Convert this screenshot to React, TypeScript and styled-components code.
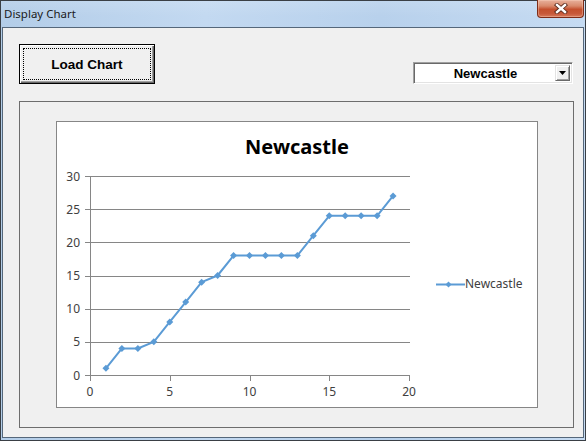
import styled, { createGlobalStyle } from "styled-components";

const GlobalStyle = createGlobalStyle`
  html, body {
    margin: 0;
    padding: 0;
    background: #ffffff;
  }
  * {
    box-sizing: border-box;
  }
`;

// points per race week, x = 1..19
const scores = [1, 4, 4, 5, 8, 11, 14, 15, 18, 18, 18, 18, 18, 21, 24, 24, 24, 24, 27];

const PLOT_LEFT = 33;
const PLOT_RIGHT = 352;
const PLOT_TOP = 10;
const PLOT_BOTTOM = 209;
const SERIES_BLUE = "#5b9bd5";

const sx = (v: number) => PLOT_LEFT + (v * (PLOT_RIGHT - PLOT_LEFT)) / 20;
const sy = (v: number) => PLOT_BOTTOM - (v * (PLOT_BOTTOM - PLOT_TOP)) / 30;
const crisp = (v: number) => Math.round(v) + 0.5;

const diamond = (x: number, y: number, r = 3.5) =>
  `${x},${y - r} ${x + r},${y} ${x},${y + r} ${x - r},${y}`;

const App = (): JSX.Element => {
  const yTicks = [0, 5, 10, 15, 20, 25, 30];
  const xTicks = [0, 5, 10, 15, 20];
  const linePoints = scores.map((s, i) => `${sx(i + 1)},${sy(s)}`).join(" ");

  return (
    <>
      <GlobalStyle />
      <Window>
        <TitleBar>
          <Caption>Display Chart</Caption>
          <CloseButton>
            <svg width="14" height="11" viewBox="0 0 14 11">
              <path d="M3 2 L11 9 M11 2 L3 9" stroke="#5a2a1c" strokeWidth="4.2" strokeLinecap="square" />
              <path d="M3 2 L11 9 M11 2 L3 9" stroke="#ffffff" strokeWidth="2.4" strokeLinecap="square" />
            </svg>
          </CloseButton>
        </TitleBar>
        <Client>
          <TopRow>
            <PushButton>
              <FocusRect>Load Chart</FocusRect>
            </PushButton>
            <ComboBox>
              <ComboText>Newcastle</ComboText>
              <ComboArrow>
                <svg width="7" height="4" viewBox="0 0 7 4">
                  <polygon points="0,0 7,0 3.5,4" fill="#000" />
                </svg>
              </ComboArrow>
            </ComboBox>
          </TopRow>
          <Frame>
            <ChartBox>
              <ChartTitle>Newcastle</ChartTitle>
              <ChartBody>
                <svg width="370" height="241" viewBox="0 0 370 241">
                  <g shapeRendering="crispEdges" stroke="#868686" strokeWidth="1">
                    {yTicks.map((t) => (
                      <line key={`g${t}`} x1={PLOT_LEFT - 5} x2={PLOT_RIGHT + 1} y1={crisp(sy(t))} y2={crisp(sy(t))} />
                    ))}
                    <line x1={crisp(PLOT_LEFT)} x2={crisp(PLOT_LEFT)} y1={crisp(PLOT_TOP)} y2={crisp(PLOT_BOTTOM) + 5} />
                    {xTicks.slice(1).map((t) => (
                      <line key={`t${t}`} x1={crisp(sx(t))} x2={crisp(sx(t))} y1={crisp(PLOT_BOTTOM)} y2={crisp(PLOT_BOTTOM) + 5} />
                    ))}
                  </g>
                  <g fill="#404040" fontFamily="'Noto Sans', 'DejaVu Sans', sans-serif" fontSize="12">
                    {yTicks.map((t) => (
                      <text key={`y${t}`} x={23} y={sy(t) + 4.5} textAnchor="end">
                        {t}
                      </text>
                    ))}
                    {xTicks.map((t) => (
                      <text key={`x${t}`} x={sx(t)} y={230} textAnchor="middle">
                        {t}
                      </text>
                    ))}
                  </g>
                  <polyline points={linePoints} fill="none" stroke={SERIES_BLUE} strokeWidth="2" strokeLinejoin="round" />
                  {scores.map((s, i) => (
                    <polygon key={i} points={diamond(sx(i + 1), sy(s))} fill={SERIES_BLUE} />
                  ))}
                </svg>
                <Legend>
                  <svg width="29" height="9" viewBox="0 0 29 9">
                    <line x1="0" x2="29" y1="4.5" y2="4.5" stroke={SERIES_BLUE} strokeWidth="2" />
                    <polygon points={diamond(12.5, 4.5, 3)} fill={SERIES_BLUE} />
                  </svg>
                  <LegendLabel>Newcastle</LegendLabel>
                </Legend>
              </ChartBody>
            </ChartBox>
          </Frame>
        </Client>
      </Window>
    </>
  );
};

const Window = styled.div`
  width: 586px;
  height: 441px;
  display: flex;
  flex-direction: column;
  border: 1px solid #3a3f45;
  background: linear-gradient(90deg, #b3cde8 0%, #c3d9f1 35%, #b8d1ec 65%, #c6dbf2 100%);
`;

const TitleBar = styled.div`
  height: 26px;
  display: flex;
  justify-content: space-between;
  align-items: flex-start;
  padding: 0 1px 0 3px;
  background: linear-gradient(180deg, rgba(255, 255, 255, 0.12) 0%, rgba(255, 255, 255, 0) 60%);
`;

const Caption = styled.div`
  margin-top: 5px;
  font-family: "Noto Sans", "Segoe UI", sans-serif;
  font-size: 11.5px;
  line-height: 16px;
  color: #1b1b1b;
`;

const CloseButton = styled.div`
  width: 47px;
  height: 18px;
  margin-top: -1px;
  display: flex;
  align-items: center;
  justify-content: center;
  border: 1px solid #7e2c18;
  border-top: none;
  border-radius: 0 0 4px 4px;
  background: linear-gradient(
    180deg,
    #e8b19c 0%,
    #d98a6c 35%,
    #c4502e 55%,
    #c7593a 80%,
    #d7795c 100%
  );
  box-shadow: inset 0 0 0 1px rgba(255, 220, 200, 0.35);
`;

const Client = styled.div`
  flex: 1;
  display: flex;
  flex-direction: column;
  margin: 0 1px 2px 1px;
  border: 1px solid #55677a;
  background: #f0f0f0;
  padding: 16px 9px 9px 16px;
`;

const TopRow = styled.div`
  height: 40px;
  display: flex;
  justify-content: space-between;
  align-items: flex-start;
  margin-bottom: 17px;
`;

const PushButton = styled.div`
  width: 136px;
  height: 40px;
  display: flex;
  padding: 3px 3px 3px 3px;
  border: 1px solid #000000;
  background: #f0f0f0;
  box-shadow: inset 1px 1px 0 #ffffff, inset -1px -1px 0 #696969, inset -2px -2px 0 #a0a0a0;
`;

const FocusRect = styled.span`
  flex: 1;
  display: flex;
  align-items: center;
  justify-content: center;
  border: 1px dotted #000000;
  font-family: "Liberation Sans", Arial, sans-serif;
  font-weight: 700;
  font-size: 13.5px;
  color: #000000;
`;

const ComboBox = styled.div`
  width: 160px;
  height: 22px;
  margin-top: 18px;
  margin-right: 1px;
  display: flex;
  align-items: center;
  padding: 2px;
  background: #ffffff;
  border: 1px solid;
  border-color: #a0a0a0 #ffffff #ffffff #a0a0a0;
  box-shadow: inset 1px 1px 0 #696969, inset -1px -1px 0 #e3e3e3;
`;

const ComboText = styled.span`
  flex: 1;
  text-align: center;
  font-family: "Liberation Sans", Arial, sans-serif;
  font-weight: 700;
  font-size: 13px;
  color: #000000;
`;

const ComboArrow = styled.span`
  width: 15px;
  height: 16px;
  display: flex;
  align-items: center;
  justify-content: center;
  background: #f0f0f0;
  border: 1px solid;
  border-color: #e3e3e3 #696969 #696969 #e3e3e3;
  box-shadow: inset 1px 1px 0 #ffffff, inset -1px -1px 0 #a0a0a0;
`;

const Frame = styled.div`
  flex: 1;
  display: flex;
  padding: 19px 35px 19px 36px;
  border: 1px solid #6d6d6d;
`;

const ChartBox = styled.div`
  flex: 1;
  display: flex;
  flex-direction: column;
  background: #ffffff;
  border: 1px solid #868686;
`;

const ChartTitle = styled.div`
  height: 44px;
  padding-top: 4px;
  display: flex;
  align-items: center;
  justify-content: center;
  font-family: "Noto Sans", "Open Sans", sans-serif;
  font-weight: 700;
  font-size: 20px;
  color: #000000;
`;

const ChartBody = styled.div`
  flex: 1;
  display: flex;
  align-items: center;

  svg {
    display: block;
  }
`;

const Legend = styled.div`
  display: flex;
  align-items: center;
  margin: 0 0 5px 9px;
`;

const LegendLabel = styled.span`
  font-family: "Noto Sans", "Open Sans", sans-serif;
  font-size: 12px;
  line-height: 14px;
  color: #404040;
`;

export default App;
